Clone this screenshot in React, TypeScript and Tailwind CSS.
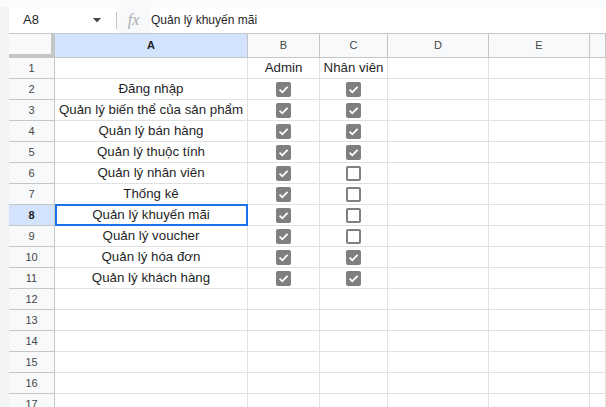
import React from "react";

const rows: { label: string; b: boolean; c: boolean }[] = [
  { label: "Đăng nhập", b: true, c: true },
  { label: "Quản lý biến thể của sản phẩm", b: true, c: true },
  { label: "Quản lý bán hàng", b: true, c: true },
  { label: "Quản lý thuộc tính", b: true, c: true },
  { label: "Quản lý nhân viên", b: true, c: false },
  { label: "Thống kê", b: true, c: false },
  { label: "Quản lý khuyến mãi", b: true, c: false },
  { label: "Quản lý voucher", b: true, c: false },
  { label: "Quản lý hóa đơn", b: true, c: true },
  { label: "Quản lý khách hàng", b: true, c: true },
];

const SELECTED_ROW = 8;

function Checkbox({ checked }: { checked: boolean }) {
  if (!checked) {
    return <div className="w-[15px] h-[15px] rounded-[2px] border-2 border-[#7f7f7f] bg-white" />;
  }
  return (
    <div className="w-[15px] h-[15px] rounded-[2px] bg-[#7f7f7f] flex items-center justify-center">
      <svg width="15" height="15" viewBox="0 0 15 15">
        <path d="M3.6 7.6 L6.3 10.3 L11.6 4.8" fill="none" stroke="white" strokeWidth="1.8" />
      </svg>
    </div>
  );
}

function RowHeader({ n }: { n: number }) {
  const sel = n === SELECTED_ROW;
  return (
    <div
      className={
        "h-[21px] border-r border-b border-[#c4c7c5] flex items-center justify-center text-[11px] " +
        (sel ? "bg-[#d3e3fd] text-[#1f1f1f] font-bold" : "bg-[#f8f9fa] text-[#444746]")
      }
    >
      {n}
    </div>
  );
}

function Cell({ children, className = "" }: { children?: React.ReactNode; className?: string }) {
  return (
    <div className={"h-[21px] border-r border-b border-[#e1e1e1] flex items-center justify-center " + className}>
      {children}
    </div>
  );
}

export default function App() {
  const colHeaders = ["A", "B", "C", "D", "E", ""];

  return (
    <div className="w-[606px] h-[407px] overflow-hidden bg-white font-['Liberation_Sans',Arial,sans-serif] text-[#1f1f1f]">
      <div className="h-[7px] bg-[#f9fbfd]" />
      <div className="flex">
        <div className="w-[9px] h-[400px] shrink-0 bg-[#f1f3f4]" />
        <div className="flex-1 flex flex-col min-w-0">
          {/* formula bar */}
          <div className="h-[26px] flex items-center bg-white">
            <div className="w-[107px] h-full flex items-center justify-between pl-[14px] pr-[15px] text-[13px]">
              <span>A8</span>
              <svg width="8" height="5" viewBox="0 0 8 5">
                <path d="M0 0 L8 0 L4 4.5 Z" fill="#444746" />
              </svg>
            </div>
            <div className="w-px h-[17px] bg-[#c7c7c7]" />
            <div className="w-[33px] h-full bg-[#f8f9fa] flex items-center justify-center">
              <span className="italic text-[16px] text-[#a8abae] font-['Liberation_Serif',serif]">fx</span>
            </div>
            <span className="text-[12px] ml-px">Quản lý khuyến mãi</span>
          </div>

          {/* grid */}
          <div className="border-t border-[#c4c7c5] grid grid-cols-[46px_193px_72px_68px_101px_101px_1fr]">
            <div className="h-[24px] bg-[#f8f9fa] border-r-4 border-b-4 border-[#c4c7c5]" />
            {colHeaders.map((h, i) => (
              <div
                key={i}
                className={
                  "h-[24px] border-r border-b border-[#c4c7c5] flex items-center justify-center text-[11px] " +
                  (h === "A" ? "bg-[#d3e3fd] text-[#1f1f1f] font-bold" : "bg-[#f8f9fa] text-[#444746]")
                }
              >
                {h}
              </div>
            ))}

            {/* row 1 */}
            <RowHeader n={1} />
            <Cell />
            <Cell className="text-[13.3px]">Admin</Cell>
            <Cell className="text-[13.3px]">Nhân viên</Cell>
            <Cell />
            <Cell />
            <Cell />

            {rows.map((r, i) => {
              const n = i + 2;
              const sel = n === SELECTED_ROW;
              return (
                <React.Fragment key={n}>
                  <RowHeader n={n} />
                  <Cell className="text-[13.3px] relative whitespace-nowrap">
                    {sel && <div className="absolute -top-px left-0 right-[-1px] bottom-[-1px] border-2 border-[#1a73e8]" />}
                    {r.label}
                  </Cell>
                  <Cell>
                    <Checkbox checked={r.b} />
                  </Cell>
                  <Cell>
                    <Checkbox checked={r.c} />
                  </Cell>
                  <Cell />
                  <Cell />
                  <Cell />
                </React.Fragment>
              );
            })}

            {[12, 13, 14, 15, 16, 17].map((n) => (
              <React.Fragment key={n}>
                <RowHeader n={n} />
                <Cell />
                <Cell />
                <Cell />
                <Cell />
                <Cell />
                <Cell />
              </React.Fragment>
            ))}
          </div>
        </div>
      </div>
    </div>
  );
}
